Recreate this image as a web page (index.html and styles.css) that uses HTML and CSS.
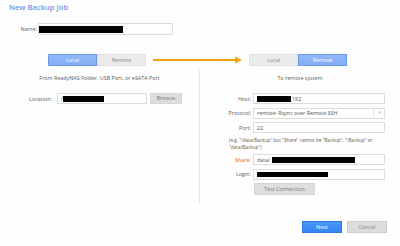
FILE: index.html
```html
<!DOCTYPE html>
<html>
<head>
<meta charset="utf-8">
<link rel="stylesheet" href="styles.css">
</head>
<body>
<div class="dialog">
  <div class="title">New Backup Job</div>
  <div class="name-row">
    <span class="name-label">Name:</span>
    <div class="field name-field"><span class="redact r-name"></span></div>
  </div>
  <div class="toggles">
    <div class="toggle">
      <span class="tbtn active">Local</span><span class="tbtn">Remote</span>
    </div>
    <svg class="arrow" width="90" height="10" viewBox="0 0 90 10">
      <line x1="0" y1="5" x2="84" y2="5" stroke="#f2a50c" stroke-width="2"/>
      <polygon points="82,1.5 89,5 82,8.5" fill="#f2a50c"/>
    </svg>
    <div class="toggle">
      <span class="tbtn">Local</span><span class="tbtn active">Remote</span>
    </div>
  </div>
  <div class="panels">
    <div class="panel left">
      <div class="subtitle">From ReadyNAS Folder, USB Port, or eSATA Port</div>
      <div class="loc-row">
        <span class="loc-label">Location:</span>
        <div class="field loc-field"><span class="slash">/</span><span class="redact r-loc"></span></div>
        <span class="btn browse">Browse</span>
      </div>
    </div>
    <div class="panel right">
      <div class="subtitle">To remote system</div>
      <div class="form">
        <span class="lbl">Host:</span>
        <div class="field"><span class="redact r-host"></span><span>182</span></div>
        <span class="lbl">Protocol:</span>
        <div class="field select"><span class="sel-text">remote: Rsync over Remote SSH</span><span class="caret">&#8964;</span></div>
        <span class="lbl">Port:</span>
        <div class="field"><span>22</span></div>
        <div class="hint"><span class="hint-line">(e.g. "/data/Backup" but "Share" cannot be "Backup", "/Backup" or</span><span class="hint-line">"data/Backup")</span></div>
        <span class="lbl share">Share:</span>
        <div class="field"><span>data/</span><span class="redact r-share"></span></div>
        <span class="lbl">Login:</span>
        <div class="field"><span class="redact r-login"></span></div>
        <span></span>
        <div class="test-wrap"><span class="btn test">Test Connection</span></div>
      </div>
    </div>
  </div>
  <div class="footer">
    <span class="btn next">Next</span>
    <span class="btn cancel">Cancel</span>
  </div>
</div>
</body>
</html>
```
FILE: styles.css
```css
html, body {
  margin: 0;
  padding: 0;
}
body {
  width: 400px;
  height: 246px;
  background: #fefefe;
  font-family: "Open Sans", "Noto Sans", sans-serif;
  font-size: 5.4px;
  color: #5a5a5a;
  overflow: hidden;
}
.title {
  padding: 3px 0 0 9px;
  line-height: 9px;
  font-size: 7.6px;
  font-weight: 600;
  color: #7193e4;
}
.name-row {
  display: flex;
  align-items: center;
  margin-top: 11px;
}
.name-label {
  width: 38px;
  text-align: right;
  padding-right: 1px;
  box-sizing: border-box;
}
.field {
  box-sizing: border-box;
  height: 11px;
  border: 1px solid #dcdcdc;
  background: #ffffff;
  display: flex;
  align-items: center;
  color: #555;
  padding-left: 3px;
}
.name-field {
  width: 135px;
  height: 12px;
  padding-left: 0;
}
.redact {
  display: inline-block;
  background: #000;
  height: 6px;
}
.r-name { width: 84px; height: 7px; }
.toggles {
  display: flex;
  align-items: center;
  margin-top: 19px;
  padding-left: 48px;
}
.toggle {
  display: flex;
  height: 12px;
}
.tbtn {
  box-sizing: border-box;
  width: 49px;
  height: 12px;
  line-height: 10px;
  text-align: center;
  background: #ebebeb;
  border: 1px solid #e0e0e0;
  color: #8a8a8a;
}
.tbtn.active {
  background: linear-gradient(#92b8f7, #82adf5);
  border-color: #6c9be8;
  color: #ffffff;
}
.arrow {
  display: block;
  margin-left: 7px;
  margin-right: 6px;
}
.panels {
  display: flex;
  margin-top: 4px;
}
.panel {
  box-sizing: border-box;
  padding-top: 4px;
  height: 133px;
}
.panel.left {
  width: 200px;
  border-right: 1px solid #e6e6e6;
}
.panel.right {
  width: 200px;
}
.subtitle {
  text-align: center;
  line-height: 8px;
  color: #5a5a5a;
}
.loc-row {
  display: flex;
  align-items: center;
  margin-top: 11px;
}
.loc-label {
  width: 57px;
  text-align: right;
  padding-right: 5px;
  box-sizing: border-box;
}
.loc-field {
  width: 90px;
}
.r-loc { width: 41px; }
.btn {
  box-sizing: border-box;
  display: inline-block;
  text-align: center;
  height: 12px;
  line-height: 10px;
  border: 1px solid #d6d6d6;
  background: #dedede;
  color: #7a7a7a;
}
.browse {
  width: 32px;
  height: 11px;
  line-height: 9px;
  margin-left: 3px;
}
.form {
  display: grid;
  grid-template-columns: 51px 132px;
  column-gap: 2px;
  row-gap: 3.5px;
  margin-top: 11px;
  align-items: center;
}
.lbl {
  text-align: right;
}
.lbl.share {
  color: #e0562a;
}
.r-host { width: 34px; margin-right: 1px; }
.r-share { width: 83px; margin-left: 2px; }
.r-login { width: 71px; height: 5px; }
.select {
  justify-content: space-between;
  padding-right: 0;
}
.caret {
  width: 10px;
  height: 9px;
  border-left: 1px solid #e4e4e4;
  text-align: center;
  line-height: 5px;
  color: #888;
  font-size: 6px;
}
.hint {
  grid-column: 1 / -1;
  display: flex;
  flex-direction: column;
  padding-left: 29px;
  font-size: 4.7px;
  line-height: 7px;
}
.hint-line {
  white-space: nowrap;
}
.test-wrap {
  padding-left: 1px;
  margin-top: -0.5px;
}
.test {
  width: 61px;
}
.footer {
  display: flex;
  justify-content: flex-end;
  gap: 5px;
  margin-top: 18px;
  padding-right: 13px;
}
.next {
  width: 40px;
  background: linear-gradient(#4b97fa, #3586f2);
  border-color: #2c78dc;
  color: #ffffff;
}
.cancel {
  width: 40px;
  background: #dcdcdc;
  border-color: #cdcdcd;
  color: #8a8a8a;
}
```
